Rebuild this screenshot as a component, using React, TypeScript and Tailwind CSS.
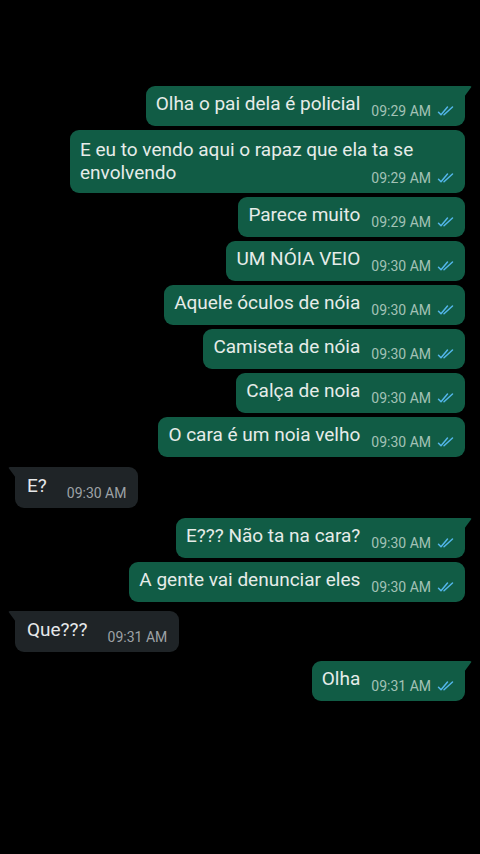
import React from "react";

const font = { fontFamily: "Roboto, 'Noto Sans', 'Liberation Sans', sans-serif" };

function Checks() {
  return (
    <svg width="18" height="12" viewBox="0 0 18 12" className="ml-[6px]" fill="none">
      <path d="M1.5 7.2 L4 9.8 L10.5 2" stroke="#53b6ea" strokeWidth="1.5" strokeLinecap="round" strokeLinejoin="round" />
      <path d="M7 9.8 L15.5 2" stroke="#53b6ea" strokeWidth="1.5" strokeLinecap="round" strokeLinejoin="round" />
    </svg>
  );
}

function SentTail() {
  return (
    <svg width="8" height="12" viewBox="0 0 8 12" className="absolute top-0 -right-[7px]">
      <path d="M0 0 L6 0 Q8 0 7 1.6 L0 11 Z" fill="#115c45" />
    </svg>
  );
}

function RecvTail() {
  return (
    <svg width="8" height="12" viewBox="0 0 8 12" className="absolute top-0 -left-[7px]">
      <path d="M8 0 L2 0 Q0 0 1 1.6 L8 11 Z" fill="#1f2427" />
    </svg>
  );
}

function Sent({ text, time, tail, mt }: { text: React.ReactNode; time: string; tail?: boolean; mt: string }) {
  return (
    <div className={`flex justify-end pr-[15px] ${mt}`}>
      <div className={`relative flex items-end bg-[#115c45] rounded-[9px] ${tail ? "rounded-tr-none" : ""} pl-[10px] pr-[10px] pt-[7px] pb-[7px]`}>
        {tail && <SentTail />}
        <span className="text-[19px] leading-[22px] text-[#e6ece9] pb-[4px]">{text}</span>
        <span className="flex items-center ml-[11px] text-[14px] leading-[16px] text-[#a3c2b6]">
          {time}
          <Checks />
        </span>
      </div>
    </div>
  );
}

function Recv({ text, time, mt }: { text: string; time: string; mt: string }) {
  return (
    <div className={`flex justify-start pl-[15px] ${mt}`}>
      <div className="relative flex items-end bg-[#1f2427] rounded-[9px] rounded-tl-none pl-[12px] pr-[12px] pt-[7px] pb-[7px] h-[41px]">
        <RecvTail />
        <span className="text-[19px] leading-[22px] text-[#e6e8ea] pb-[4px]">{text}</span>
        <span className="ml-[20px] text-[14px] leading-[16px] text-[#9da2a6]">{time}</span>
      </div>
    </div>
  );
}

export default function App() {
  return (
    <div className="w-[480px] h-[854px] bg-black overflow-hidden pt-[86px]" style={font}>
      <Sent text="Olha o pai dela é policial" time="09:29 AM" tail mt="" />
      <div className="flex justify-end pr-[15px] mt-[4px]">
        <div className="relative flex flex-col bg-[#115c45] rounded-[9px] pl-[10px] pr-[10px] pt-[8px] pb-[7px] w-[395px]">
          <span className="text-[19px] leading-[23px] text-[#e6ece9]">
            E eu to vendo aqui o rapaz que ela ta se
            <br />
            envolvendo
          </span>
          <span className="self-end flex items-center -mt-[14px] text-[14px] leading-[16px] text-[#a3c2b6]">
            09:29 AM
            <Checks />
          </span>
        </div>
      </div>
      <Sent text="Parece muito" time="09:29 AM" mt="mt-[4px]" />
      <Sent text="UM NÓIA VEIO" time="09:30 AM" mt="mt-[4px]" />
      <Sent text="Aquele óculos de nóia" time="09:30 AM" mt="mt-[4px]" />
      <Sent text="Camiseta de nóia" time="09:30 AM" mt="mt-[4px]" />
      <Sent text="Calça de noia" time="09:30 AM" mt="mt-[4px]" />
      <Sent text="O cara é um noia velho" time="09:30 AM" mt="mt-[4px]" />
      <Recv text="E?" time="09:30 AM" mt="mt-[10px]" />
      <Sent text="E??? Não ta na cara?" time="09:30 AM" tail mt="mt-[10px]" />
      <Sent text="A gente vai denunciar eles" time="09:30 AM" mt="mt-[4px]" />
      <Recv text="Que???" time="09:31 AM" mt="mt-[9px]" />
      <Sent text="Olha" time="09:31 AM" tail mt="mt-[9px]" />
    </div>
  );
}
